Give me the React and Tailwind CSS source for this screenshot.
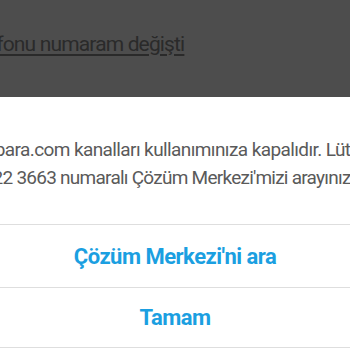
const FONT = { fontFamily: 'Roboto, "Liberation Sans", sans-serif' }

export default function App() {
  return (
    <div className="w-[350px] h-[350px] overflow-hidden bg-white flex flex-col" style={FONT}>
      <div className="h-[97px] shrink-0 bg-[#4d4d4d] overflow-hidden pt-[32px]">
        <div className="whitespace-nowrap ml-[-73px] text-[21px] leading-[24px] tracking-[-0.85px] text-[#2a2a2a] underline underline-offset-[3px]">
          Cep telefonu numaram değişti
        </div>
      </div>

      <div className="h-[127px] shrink-0 overflow-hidden pt-[39px] text-[19px] leading-[28px] tracking-[-0.6px] text-[#5a5a5a]">
        <div className="whitespace-nowrap ml-[-51px]">Hepsipara.com kanalları kullanımınıza kapalıdır. Lütfen</div>
        <div className="whitespace-nowrap ml-[-61px] tracking-[-0.75px]">0850 222 3663 numaralı Çözüm Merkezi'mizi arayınız.</div>
      </div>

      <button className="h-[63px] shrink-0 border-t border-[#dedede] flex items-center justify-center text-[22px] font-bold tracking-[-0.5px] text-[#1b9fe1]">
        Çözüm Merkezi'ni ara
      </button>
      <button className="h-[61px] shrink-0 border-t border-b border-[#dedede] flex items-center justify-center text-[22px] font-bold tracking-[-0.5px] text-[#1b9fe1]">
        Tamam
      </button>
    </div>
  )
}
